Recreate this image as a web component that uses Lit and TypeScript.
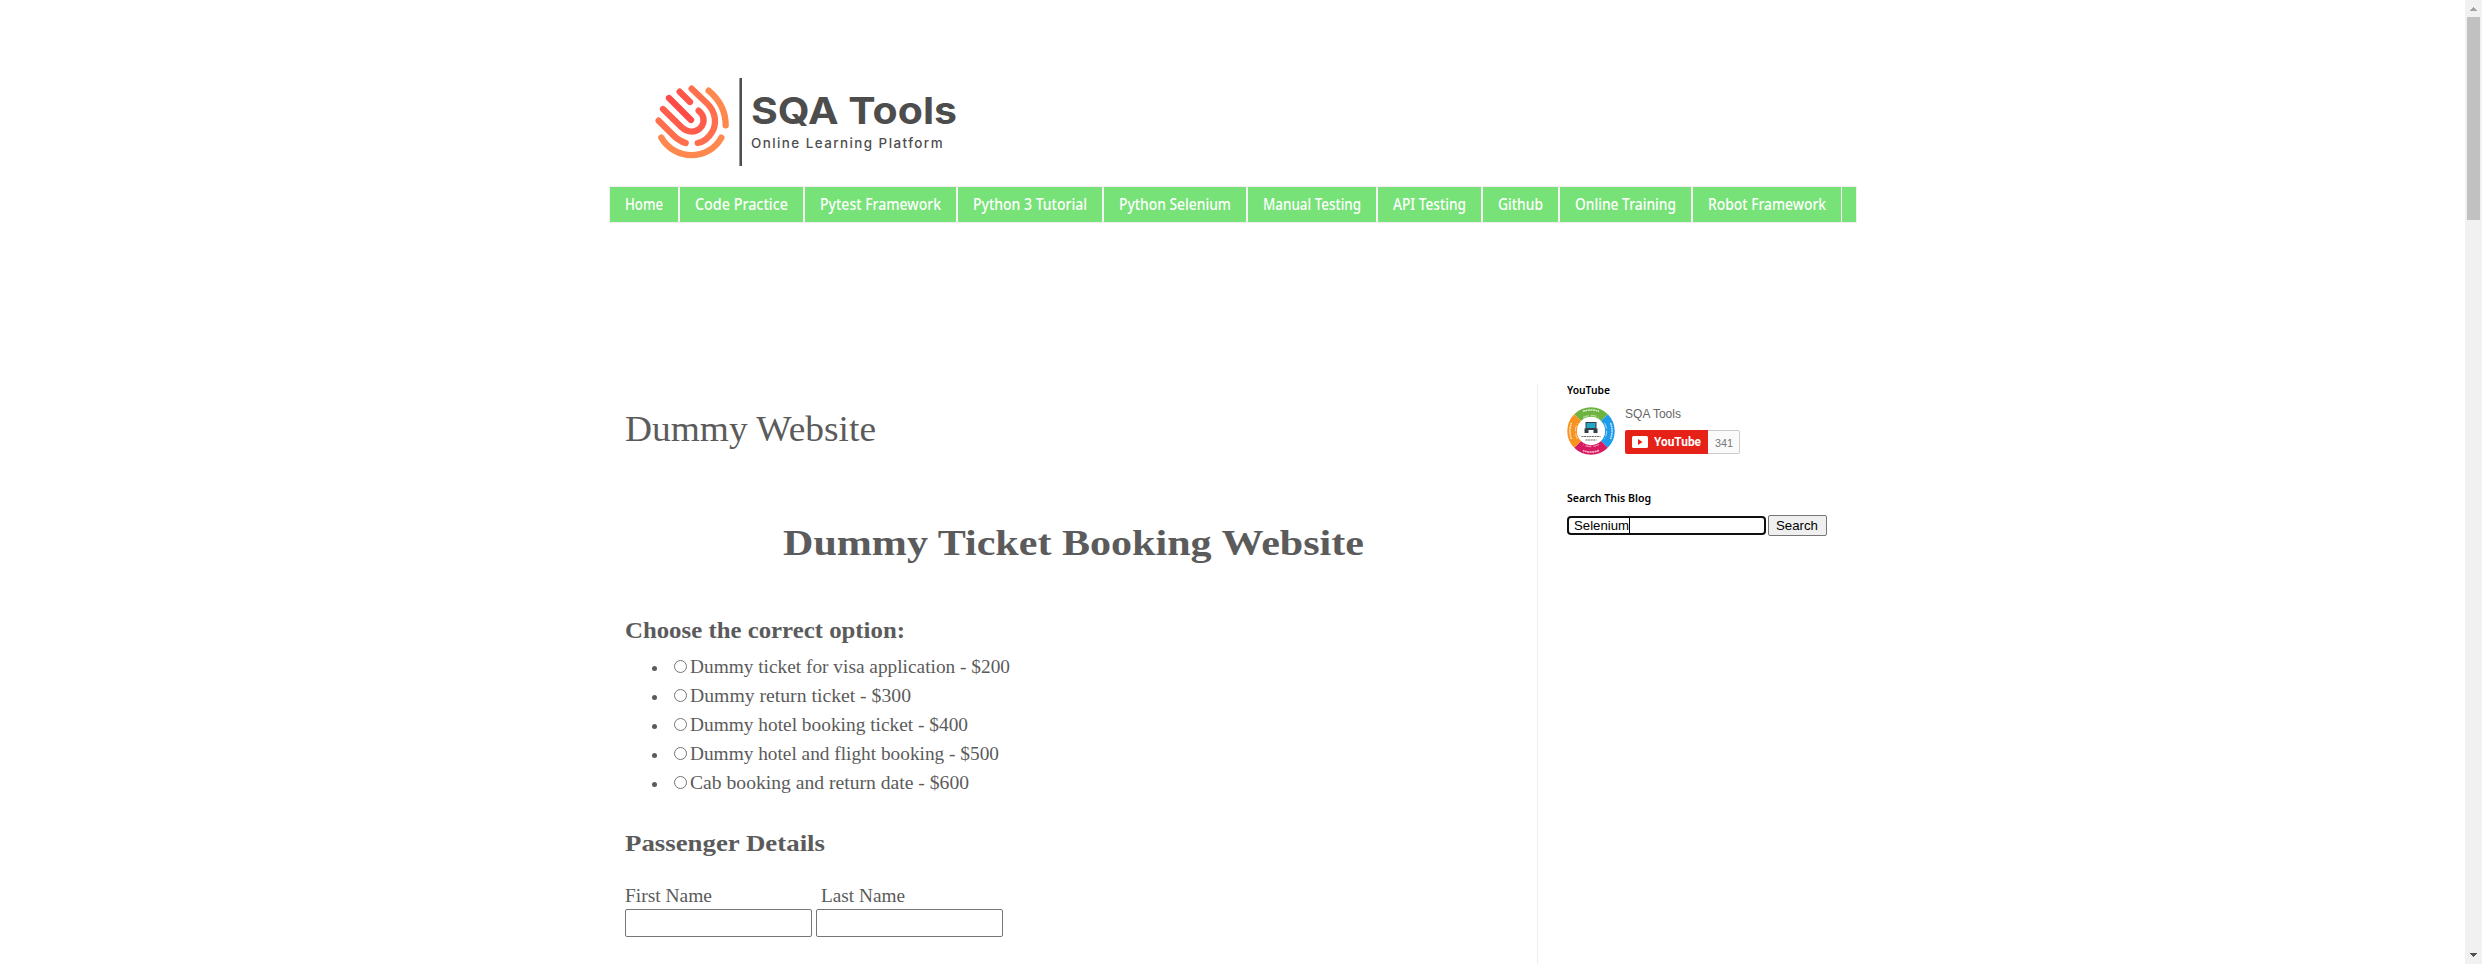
import { LitElement, html, css, svg } from "lit";
import { customElement, property } from "lit/decorators.js";

/** Single line of text stretched to an exact advance width. */
@customElement("fit-text")
class FitText extends LitElement {
  static styles = css`
    :host { display: inline-block; white-space: nowrap; vertical-align: top; text-align: left; }
    .t { display: inline-block; transform-origin: 0 50%; }
  `;
  @property({ type: Number }) w = 0;
  @property() text = "";
  firstUpdated() {
    const t = this.renderRoot.querySelector(".t") as HTMLElement;
    const natural = t.getBoundingClientRect().width;
    this.style.width = this.w + "px";
    t.style.transform = `scaleX(${this.w / natural})`;
  }
  render() {
    return html`<span class="t">${this.text}</span>`;
  }
}

const fit = (text: string, w: number) => html`<fit-text .text=${text} .w=${w}></fit-text>`;

const NAV: [string, number][] = [
  ["Home", 38], ["Code Practice", 93], ["Pytest Framework", 121], ["Python 3 Tutorial", 114],
  ["Python Selenium", 112], ["Manual Testing", 98], ["API Testing", 73], ["Github", 45],
  ["Online Training", 101], ["Robot Framework", 118],
];

const OPTIONS: [string, number][] = [
  ["Dummy ticket for visa application - $200", 320],
  ["Dummy return ticket - $300", 221],
  ["Dummy hotel booking ticket - $400", 278],
  ["Dummy hotel and flight booking - $500", 309],
  ["Cab booking and return date - $600", 279],
];

@customElement("app-root")
class AppRoot extends LitElement {
  static styles = css`
    :host { display: block; height: 964px; overflow: hidden; background: #fff; }
    * { box-sizing: border-box; }
    h1, h2, h3, ul, p { margin: 0; padding: 0; }
    .window { display: flex; height: 964px; }
    .page { flex: 1; padding-left: 610px; display: flex; flex-direction: column; font-family: "Liberation Serif", serif; color: #5b5b5b; }

    header { height: 187px; flex: none; padding: 75px 0 0 30px; display: flex; color: #4d4d4d; font-family: Inter, sans-serif; }
    .brand { padding: 13px 0 0 1px; }
    .brand .name { font-size: 37.5px; line-height: 46px; font-weight: 700; height: 45px; }
    .brand .tag { font-size: 13px; line-height: 20px; font-weight: 500; letter-spacing: 1.4px; }

    nav { flex: none; width: 1246px; height: 35px; display: flex; background: #77e277; box-shadow: 0 0 0 1px #f0eef0; }
    nav a { padding: 0 15px; border-right: 2px solid #f3f1f3; color: #fff; font: 500 15.5px/34px "Noto Sans", sans-serif; }
    nav a:last-child { border-right-width: 1px; }

    .columns { flex: 1; margin-top: 162px; display: flex; }
    main { width: 927px; padding: 24px 16px 0 15px; }
    .post { font-weight: 400; font-size: 36.5px; line-height: 42px; height: 42px; }
    .title { font-size: 36.5px; line-height: 42px; height: 42px; margin-top: 72px; text-align: center; }
    .sub { font-size: 23px; line-height: 28px; height: 28px; }
    .choose { margin-top: 53px; }
    .passenger { margin-top: 33px; }
    .options { list-style: none; margin-top: 7px; padding-left: 27px; }
    .options li { display: flex; align-items: center; height: 29px; font-size: 19.5px; line-height: 29px; }
    .dot { width: 5px; height: 5px; border-radius: 50%; background: #5b5b5b; margin: 4px 17px 0 0; }
    .radio { width: 13px; height: 13px; border: 1px solid #767676; border-radius: 50%; margin-right: 3px; background: #fff; }
    .fields { display: flex; gap: 4px; margin-top: 27px; font-size: 19.5px; line-height: 22px; }
    .field { display: flex; flex-direction: column; gap: 2px; width: 187px; }
    .field .lbl { height: 22px; }
    .field.last .lbl { padding-left: 5px; }
    .box { height: 28px; border: 1px solid #767676; border-radius: 2px; background: #fff; }

    aside { border-left: 1px solid #eee; padding-left: 29px; flex: 1; font-family: "Liberation Sans", sans-serif; }
    .wt { font: 600 10.5px/13px "Noto Sans", sans-serif; color: #000; height: 14px; }
    .channel { display: flex; gap: 10px; margin-top: 9px; height: 48px; }
    .who { font-size: 12.5px; line-height: 14px; height: 23px; color: #666; }
    .sub-row { display: flex; height: 24px; }
    .yt { width: 83px; background: #e62117; border-radius: 2px 0 0 2px; color: #fff; display: flex; align-items: center; padding-left: 7px; gap: 6px; font: 700 12px/24px Roboto, sans-serif; }
    .count { width: 32px; border: 1px solid #ccc; border-left: 0; border-radius: 0 2px 2px 0; background: #fafafa; color: #777; font-size: 11px; line-height: 25px; padding-left: 7px; }
    .search-title { margin-top: 37px; }
    .search { display: flex; align-items: center; gap: 2px; margin-top: 9px; font-size: 13.33px; color: #000; }
    .q { width: 199px; height: 19px; border: 2px solid #101010; border-radius: 4px; display: flex; align-items: center; padding-left: 5px; }
    .caret { width: 1px; height: 15px; background: #000; }
    .go { width: 59px; height: 21px; border: 1px solid #767676; border-radius: 2px; background: #efefef; padding-left: 7px; line-height: 19px; }

    .scroll { width: 17px; background: #f1f1f1; display: flex; flex-direction: column; align-items: center; }
    .thumb { width: 13px; height: 203px; background: #c1c1c1; }
    .fill { flex: 1; }
    svg { display: block; flex: none; }
  `;

  logo() {
    return html`<svg width="110" height="95" viewBox="0 0 330 285" fill="none" stroke-width="19" stroke-linecap="round">
      <path stroke="#ff884f" d="M206 47Q257 90 257 151" />
      <path stroke="#ff6f4e" d="M155 41L203 87C230 114 229 150 217 170C206 189 190 201 173 204" />
      <path stroke="#ff5548" d="M119 50L150 81" />
      <path stroke="#ff4b48" d="M87 69L153 135" />
      <path stroke="#ff5c4b" d="M69 102L124 156C142 173 170 176 185 154C196 137 190 118 176 107" />
      <path stroke="#ff6f4e" d="M56 137L96 177Q115 197 137 204" />
      <path stroke="#ff884f" d="M64 188C105 258 205 258 244 188" />
      <path stroke="#999" stroke-width="3" stroke-linecap="butt" d="M298.500 9V273" />
      <path stroke="#4d4d4d" stroke-width="6" stroke-linecap="butt" d="M303 9V273" />
    </svg>`;
  }

  avatar() {
    const arc = (c: string, r: number) =>
      svg`<path stroke=${c} transform="rotate(${r} 24 24)" d="M10.600 10.600A19 19 0 0 1 37.400 10.600" />`;
    const marks = [0, 90, 180, 270].map(
      (r) => svg`<g transform="rotate(${r} 24 24)">
        <path stroke="#fff" stroke-opacity=".75" stroke-width="1.500" stroke-dasharray="2 .5" d="M16 4.500A21 21 0 0 1 32 4.500" />
        <path stroke="#fff" stroke-opacity=".5" stroke-width="1.200" stroke-dasharray="6 2" d="M16 10.500A16 16 0 0 1 32 10.500" />
      </g>`
    );
    return html`<svg width="48" height="48" viewBox="0 0 48 48" fill="none" stroke-width="9.600">
      ${arc("#6cb33f", 0)}${arc("#1e9be9", 90)}${arc("#d81b60", 180)}${arc("#f7931e", 270)}${marks}
      <path fill="#333f48" d="M18.500 15h11v8h-11zM17.500 21.500h4v4.500h-4zM26.500 21.500h4v4.500h-4z" />
      <path fill="#22a7c4" d="M19.500 16h9v5h-9z" />
      <path stroke="#666" stroke-width="1" stroke-dasharray="2 .6" d="M14.500 29.500h19M18.500 33h11" />
    </svg>`;
  }

  render() {
    return html`<div class="window">
      <div class="page">
        <header>
          ${this.logo()}
          <div class="brand">
            <div class="name">${fit("SQA Tools", 206)}</div>
            <div class="tag">${fit("Online Learning Platform", 193)}</div>
          </div>
        </header>
        <nav>${NAV.map(([t, w]) => html`<a>${fit(t, w)}</a>`)}</nav>
        <div class="columns">
          <main>
            <h3 class="post">${fit("Dummy Website", 251)}</h3>
            <h1 class="title">${fit("Dummy Ticket Booking Website", 581)}</h1>
            <h2 class="sub choose">${fit("Choose the correct option:", 280)}</h2>
            <ul class="options">
              ${OPTIONS.map(([t, w]) => html`<li><span class="dot"></span><span class="radio"></span>${fit(t, w)}</li>`)}
            </ul>
            <h2 class="sub passenger">${fit("Passenger Details", 200)}</h2>
            <div class="fields">
              <div class="field"><div class="lbl">${fit("First Name", 87)}</div><div class="box"></div></div>
              <div class="field last"><div class="lbl">${fit("Last Name", 84)}</div><div class="box"></div></div>
            </div>
          </main>
          <aside>
            <div class="wt">${fit("YouTube", 43)}</div>
            <div class="channel">
              ${this.avatar()}
              <div>
                <div class="who">${fit("SQA Tools", 56)}</div>
                <div class="sub-row">
                  <div class="yt">
                    <svg width="16" height="12" viewBox="0 0 16 12"><rect width="16" height="12" rx="1.500" fill="#fff" /><path d="M6 3v6l4.500-3z" fill="#e62117" /></svg>
                    ${fit("YouTube", 47)}
                  </div>
                  <div class="count">${fit("341", 18)}</div>
                </div>
              </div>
            </div>
            <div class="wt search-title">${fit("Search This Blog", 84)}</div>
            <div class="search">
              <div class="q">${fit("Selenium", 55)}<span class="caret"></span></div>
              <div class="go">${fit("Search", 42)}</div>
            </div>
          </aside>
        </div>
      </div>
      <div class="scroll">
        <svg width="17" height="17" shape-rendering="crispEdges"><path d="M8 7h1v1h1v1h1v1h1v1H5v-1h1V9h1V8h1z" fill="#a3a3a3" /></svg>
        <div class="thumb"></div>
        <div class="fill"></div>
        <svg width="17" height="17" shape-rendering="crispEdges"><path d="M5 6h7v1h-1v1h-1v1H9v1H8V9H7V8H6V7H5z" fill="#505050" /></svg>
      </div>
    </div>`;
  }
}
